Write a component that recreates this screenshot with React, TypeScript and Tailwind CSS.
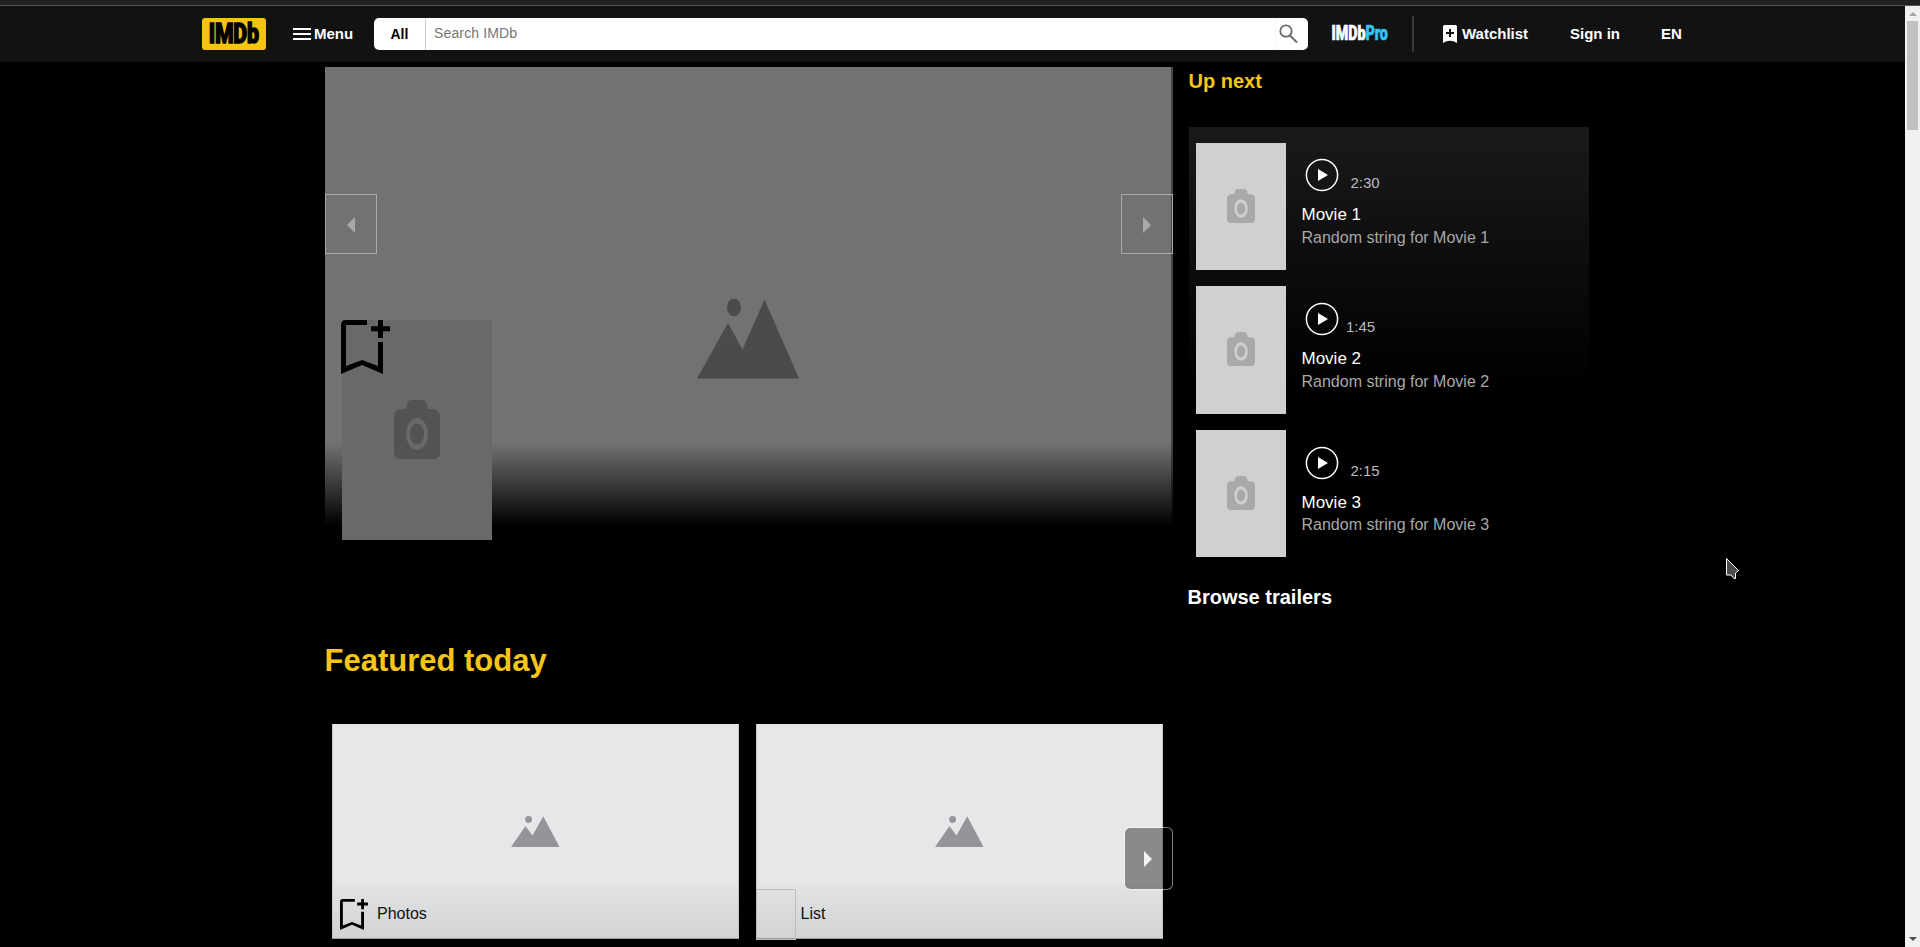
import type { ReactNode } from "react";

const movies = [
  { id: 1, time: "2:30", inset: "pl-[49px]" },
  { id: 2, time: "1:45", inset: "pl-[44.5px]" },
  { id: 3, time: "2:15", inset: "pl-[49px]" },
];

function BookmarkAdd({ className }: { className: string }) {
  return (
    <svg viewBox="0 0 49 54" preserveAspectRatio="none" className={className} fill="currentColor" aria-hidden="true">
      <path d="M26 0H5Q0 0 0 5V54L21 45L42 54V22H37V46L21 40L5 46V5H26Z" />
      <path d="M37 0h5v6.3h7v5h-7V18h-5v-6.700h-7v-5h7Z" />
    </svg>
  );
}

function Camera({ className }: { className: string }) {
  return (
    <svg viewBox="0 0 46 59" preserveAspectRatio="none" className={className} aria-hidden="true">
      <path
        fill="currentColor"
        fillRule="evenodd"
        d="M6 9H12L13.500 3Q14.500 0 17.500 0H28.500Q31.500 0 32.500 3L34 9H40Q46 10 46 17V51Q46 59 40 59H6Q0 59 0 51V17Q0 10 6 9ZM23 18C17 18 12.200 25 12.200 34S17 50 23 50S34 43 34 34S29 18 23 18Z"
      />
      <ellipse cx="23" cy="34" rx="7" ry="10.500" fill="currentColor" />
    </svg>
  );
}

function SmallMountains() {
  return (
    <svg width="49" height="31" viewBox="0 0 49 31" fill="#949598" aria-hidden="true">
      <circle cx="17.600" cy="3.500" r="3.400" />
      <path d="M0 31L14.500 10L21.500 19.500L32.300 0.300L48.500 31Z" />
    </svg>
  );
}

function Play() {
  return (
    <svg width="34" height="34" viewBox="0 0 34 34" aria-hidden="true">
      <circle cx="17" cy="17" r="15.600" fill="none" stroke="white" strokeWidth="1.500" />
      <path d="M13 11L23 17L13 23Z" fill="white" />
    </svg>
  );
}

function Header() {
  return (
    <header className="flex h-14 items-start bg-[#121212] pl-[202px] text-[15px] font-bold leading-[18px] text-white">
      <div className="mt-3 flex h-8 w-16 shrink-0 items-center justify-center rounded-[3px] bg-[#f5c50b]">
        <span className="origin-center scale-x-[0.79] text-[27px] leading-8 font-black tracking-[-0.01em] whitespace-nowrap text-black [-webkit-text-stroke:1.3px_black] [font-family:Roboto,sans-serif]">
          IMDb
        </span>
      </div>
      <div className="mt-[19px] ml-[27px] flex w-[81px] shrink-0 items-center">
        <svg width="18" height="12" viewBox="0 0 18 12" fill="white" aria-hidden="true">
          <path d="M0 0h18v2H0zM0 5h18v2H0zM0 10h18v2H0z" />
        </svg>
        <span className="ml-[3px]">Menu</span>
      </div>
      <div className="mt-3 flex h-8 w-[934px] shrink-0 overflow-hidden rounded-[5px] bg-white text-[14px]">
        <div className="w-[52px] border-r border-[#ccc] pl-[16.5px] text-black">
          <div className="pt-[7px]">All</div>
        </div>
        <div className="flex-1 pt-[6px] pl-2 font-normal tracking-[0.01em] text-[#757575]">Search IMDb</div>
        <div className="w-[33px] border-l border-[#f5f5f5] pt-[6px] pl-[2.5px]">
          <svg width="20" height="20" viewBox="0 0 20 20" fill="none" stroke="#6b6b6b" aria-hidden="true">
            <circle cx="7" cy="7" r="5.700" strokeWidth="1.800" />
            <path d="M11 11.500L18 18.500" strokeWidth="2" />
          </svg>
        </div>
      </div>
      <div className="mt-[18px] ml-[23px] flex h-5 w-[58px] shrink-0 justify-center text-[19.500px] leading-5 font-black [font-family:Roboto,sans-serif]">
        <span className="origin-center scale-x-[0.73] whitespace-nowrap [-webkit-text-stroke:0.7px_white]">
          IMDb<span className="text-[#35c3f3] [-webkit-text-stroke:0.7px_#35c3f3]">Pro</span>
        </span>
      </div>
      <div className="mt-[10px] ml-[23px] h-9 w-[2px] shrink-0 bg-[#3a3a3a]" />
      <div className="mt-[19px] ml-[29px] flex w-[127px] shrink-0">
        <svg width="14" height="18" viewBox="0 0 14 18" aria-hidden="true">
          <path d="M1.500 0H12.500Q14 0 14 1.500V18Q7 13.500 0 18V1.500Q0 0 1.500 0Z" fill="white" />
          <path d="M6 4h2v3h3v2H8v3H6v-3H3v-2h3Z" fill="#121212" />
        </svg>
        <span className="ml-[5px]">Watchlist</span>
      </div>
      <span className="mt-[19px] w-[91px] shrink-0">Sign in</span>
      <span className="mt-[19px]">EN</span>
    </header>
  );
}

function Hero() {
  return (
    <section className="relative h-[459px] w-[848px] bg-[linear-gradient(#727272_0px,#727272_376px,#000_459px)]">
      <div className="absolute top-0 right-0 h-[459px] w-[2px] bg-black/40" />
      <svg width="102" height="80" viewBox="0 0 102 80" className="absolute top-[232px] left-[372px]" fill="#4a4b4c" aria-hidden="true">
        <ellipse cx="37" cy="8.500" rx="7" ry="8.800" />
        <path d="M0 79.500L31 24L45.500 50.500L67.500 0.500L102 79.500Z" />
      </svg>
      <button className="absolute top-[127px] left-0 flex h-[60px] w-[52px] items-center justify-center border border-[#aaa] pt-[2px]">
        <svg width="8" height="16" viewBox="0 0 8 16" fill="#aaa" aria-hidden="true"><path d="M8 0V16L0 8Z" /></svg>
      </button>
      <button className="absolute top-[127px] right-0 flex h-[60px] w-[52px] items-center justify-center border border-[#aaa] pt-[2px]">
        <svg width="8" height="16" viewBox="0 0 8 16" fill="#aaa" aria-hidden="true"><path d="M0 0V16L8 8Z" /></svg>
      </button>
      <div className="absolute top-[253px] left-[17px] flex h-[220px] w-[150px] items-start justify-center bg-[#696969] pt-20">
        <Camera className="h-[59px] w-[46px] text-[#535353]" />
        <BookmarkAdd className="absolute top-0 -left-px h-[54px] w-[49px] text-black" />
      </div>
    </section>
  );
}

function UpNext() {
  return (
    <aside className="ml-4 w-[400px]">
      <h2 className="-ml-[0.5px] h-[60px] text-[20px] leading-[28px] font-bold text-[#f5c518]">Up next</h2>
      <div className="flex h-[433px] flex-col gap-4 bg-[linear-gradient(#1a1a1a,#000_60%)] pt-[15.6px] pl-[7px]">
        {movies.map((m) => (
          <div key={m.id} className="flex h-[127.6px] shrink-0">
            <div className="flex w-[90px] items-start justify-center bg-[#d0d0d0] pt-[46px]">
              <Camera className="h-[34px] w-7 text-[#aaa8a8]" />
            </div>
            <div className="pl-[15.5px]">
              <div className="relative h-[60.8px] pt-[31.8px]">
                <div className="absolute top-[15.8px] left-[3.5px]"><Play /></div>
                <div className={`text-[15px] leading-[18px] text-[#bbb] ${m.inset}`}>{m.time}</div>
              </div>
              <div className="h-[22.8px] text-[17px] leading-[24.8px] text-white">Movie {m.id}</div>
              <div className="text-[16px] leading-[23px] text-[#a8a8a8]">Random string for Movie {m.id}</div>
            </div>
          </div>
        ))}
      </div>
      <h3 className="mt-[23px] -ml-[1.5px] text-[20px] leading-[28px] font-bold text-white">Browse trailers</h3>
    </aside>
  );
}

function Card({ label, icon }: { label: string; icon: ReactNode }) {
  return (
    <article className="relative flex h-[215px] w-[407px] flex-col border-x border-b border-x-[#c4c5c6] border-b-[#999b9c] bg-[linear-gradient(#e6e7e9_158px,#e3e4e5_158px,#d1d2d3_215px)]">
      <div className="flex h-[165px] items-start justify-center pt-[92px]">
        <SmallMountains />
      </div>
      <div className="flex h-[51px] items-start">
        {icon}
        <span className="pt-[15px] pl-1 text-[16px] leading-[24px] text-[#111]">{label}</span>
      </div>
    </article>
  );
}

function Featured() {
  return (
    <section className="w-[848px]">
      <h2 className="-mt-px -ml-[0.5px] h-[80px] text-[31px] leading-[34px] font-bold text-[#f5c518]">Featured today</h2>
      <div className="relative flex gap-[17px] pl-[7px]">
        <Card
          label="Photos"
          icon={<div className="h-[51px] w-10 shrink-0 pt-3 pl-[7px]"><BookmarkAdd className="h-[31px] w-7 text-black" /></div>}
        />
        <Card label="List" icon={<div className="mt-[2px] -ml-px mr-[0.5px] h-[51px] w-10 shrink-0 border border-[#bbbdbe]" />} />
        <button className="absolute top-[103px] right-0 flex h-[63px] w-[49px] items-center justify-center rounded-md border border-white/50 bg-black/40 bg-clip-padding pr-[5px]">
          <svg width="8" height="16" viewBox="0 0 8 16" className="ml-1 fill-white/90" aria-hidden="true"><path d="M0 0V16L8 8Z" /></svg>
        </button>
      </div>
    </section>
  );
}

function Scrollbar() {
  return (
    <div className="flex h-[941px] w-[15px] shrink-0 flex-col items-center bg-[#f1f1f1]">
      <svg width="8" height="4" viewBox="0 0 8 4" className="mt-[6px] fill-[#a3a3a3]" aria-hidden="true"><path d="M0 4L4 0L8 4Z" /></svg>
      <div className="mt-[5px] h-[109px] w-[11px] bg-[#c1c1c1]" />
      <svg width="8" height="4" viewBox="0 0 8 4" className="mt-auto mb-[6px] fill-[#505050]" aria-hidden="true"><path d="M0 0H8L4 4Z" /></svg>
    </div>
  );
}

export default function App() {
  return (
    <div className="relative h-[947px] w-[1920px] overflow-hidden bg-black [font-family:'Liberation_Sans',Arial,sans-serif]">
      <div className="h-[6px] border-b border-[#555] bg-[#232323]" />
      <div className="flex">
        <div className="w-[1905px]">
          <Header />
          <main className="pt-[5px] pl-[325px]">
            <div className="flex h-[578px]">
              <Hero />
              <UpNext />
            </div>
            <Featured />
          </main>
        </div>
        <Scrollbar />
      </div>
      <svg width="14" height="22" viewBox="0 0 14 22" className="absolute top-[558px] left-[1726px]" aria-hidden="true">
        <path d="M0.500 0.500L12.500 12.500L9.500 15V20.500H8L5 17H0.500Z" fill="#4d4d4d" stroke="white" />
      </svg>
    </div>
  );
}
